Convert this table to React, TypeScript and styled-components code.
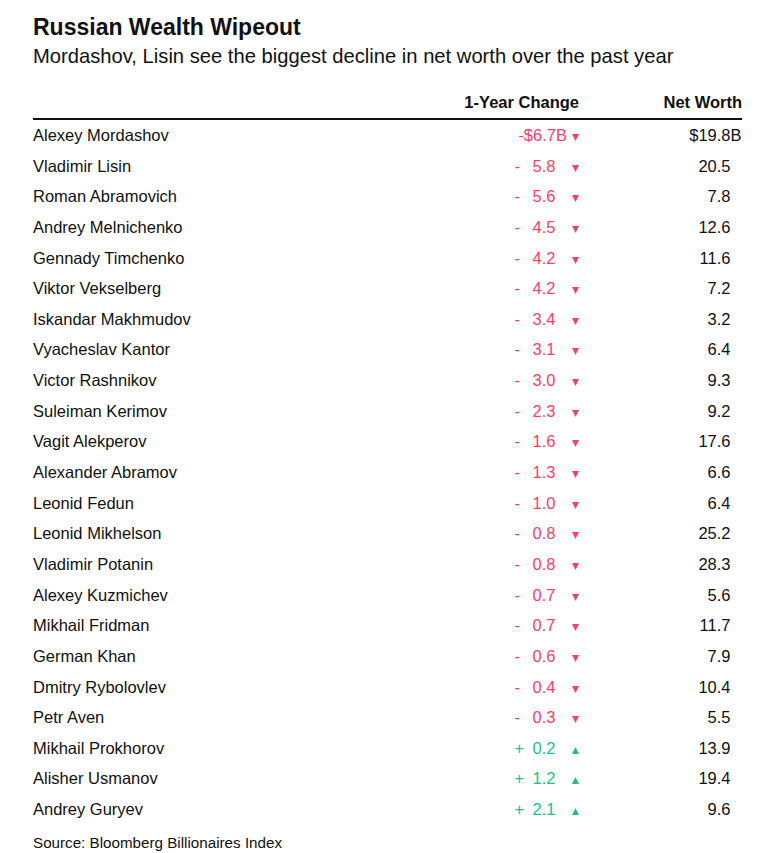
import React from "react";
import styled, { createGlobalStyle } from "styled-components";

const Global = createGlobalStyle`
  html, body { margin: 0; padding: 0; background: #ffffff; }
  body { font-family: "Liberation Sans", Arial, Helvetica, sans-serif; color: #111111; }
`;

const Page = styled.div`
  width: 709px;
  padding: 14px 0 0 33px;
`;

const Title = styled.h1`
  margin: 0;
  font-size: 23px;
  line-height: 27px;
  font-weight: 700;
  color: #111111;
`;

const Subtitle = styled.p`
  margin: 3px 0 0 0;
  font-size: 20.2px;
  line-height: 24px;
  color: #111111;
`;

const Table = styled.div`
  margin-top: 24px;
  display: grid;
  grid-template-columns: 1fr 140px 163px;
`;

const HeadCell = styled.div<{ $right?: boolean }>`
  font-size: 16.5px;
  font-weight: 700;
  line-height: 20px;
  padding-bottom: 6px;
  border-bottom: 2px solid #111111;
  text-align: ${(p) => (p.$right ? "right" : "left")};
`;

const NameCell = styled.div`
  font-size: 16.5px;
  height: 30.65px;
  line-height: 30.65px;
  white-space: nowrap;
`;

const ChangeCell = styled.div<{ $up: boolean }>`
  font-size: 16.5px;
  height: 30.65px;
  line-height: 30.65px;
  display: flex;
  justify-content: flex-end;
  align-items: baseline;
  white-space: nowrap;
  color: ${(p) => (p.$up ? "#1ec184" : "#ff3f64")};
`;

const Sign = styled.span`
  width: 6px;
`;

const Value = styled.span`
  width: 35px;
  text-align: right;
`;

const Unit = styled.span`
  width: 11.5px;
`;

const Arrow = styled.svg`
  width: 7px;
  height: 7px;
  margin-left: 5px;
`;

const WorthCell = styled.div`
  font-size: 16.5px;
  height: 30.65px;
  line-height: 30.65px;
  display: flex;
  justify-content: flex-end;
  white-space: nowrap;
`;

const WorthUnit = styled.span`
  width: 11.5px;
`;

const Source = styled.div`
  margin-top: 8px;
  font-size: 15.2px;
  line-height: 20px;
  color: #111111;
`;

type Row = { name: string; change: number; worth: string };

const rows: Row[] = [
  { name: "Alexey Mordashov", change: -6.7, worth: "19.8" },
  { name: "Vladimir Lisin", change: -5.8, worth: "20.5" },
  { name: "Roman Abramovich", change: -5.6, worth: "7.8" },
  { name: "Andrey Melnichenko", change: -4.5, worth: "12.6" },
  { name: "Gennady Timchenko", change: -4.2, worth: "11.6" },
  { name: "Viktor Vekselberg", change: -4.2, worth: "7.2" },
  { name: "Iskandar Makhmudov", change: -3.4, worth: "3.2" },
  { name: "Vyacheslav Kantor", change: -3.1, worth: "6.4" },
  { name: "Victor Rashnikov", change: -3.0, worth: "9.3" },
  { name: "Suleiman Kerimov", change: -2.3, worth: "9.2" },
  { name: "Vagit Alekperov", change: -1.6, worth: "17.6" },
  { name: "Alexander Abramov", change: -1.3, worth: "6.6" },
  { name: "Leonid Fedun", change: -1.0, worth: "6.4" },
  { name: "Leonid Mikhelson", change: -0.8, worth: "25.2" },
  { name: "Vladimir Potanin", change: -0.8, worth: "28.3" },
  { name: "Alexey Kuzmichev", change: -0.7, worth: "5.6" },
  { name: "Mikhail Fridman", change: -0.7, worth: "11.7" },
  { name: "German Khan", change: -0.6, worth: "7.9" },
  { name: "Dmitry Rybolovlev", change: -0.4, worth: "10.4" },
  { name: "Petr Aven", change: -0.3, worth: "5.5" },
  { name: "Mikhail Prokhorov", change: 0.2, worth: "13.9" },
  { name: "Alisher Usmanov", change: 1.2, worth: "19.4" },
  { name: "Andrey Guryev", change: 2.1, worth: "9.6" },
];

function Triangle({ up }: { up: boolean }) {
  return (
    <Arrow viewBox="0 0 7 7">
      {up ? (
        <polygon points="3.5,0 7,7 0,7" fill="currentColor" />
      ) : (
        <polygon points="0,0 7,0 3.5,7" fill="currentColor" />
      )}
    </Arrow>
  );
}

export default function App() {
  return (
    <>
      <Global />
      <Page>
        <Title>Russian Wealth Wipeout</Title>
        <Subtitle>Mordashov, Lisin see the biggest decline in net worth over the past year</Subtitle>
        <Table>
          <HeadCell />
          <HeadCell $right>1-Year Change</HeadCell>
          <HeadCell $right>Net Worth</HeadCell>
          {rows.map((r, i) => {
            const up = r.change > 0;
            const first = i === 0;
            const abs = Math.abs(r.change).toFixed(1);
            return (
              <React.Fragment key={r.name}>
                <NameCell>{r.name}</NameCell>
                <ChangeCell $up={up}>
                  {first ? (
                    <span>{`-$${abs}B`}</span>
                  ) : (
                    <>
                      <Sign>{up ? "+" : "-"}</Sign>
                      <Value>{abs}</Value>
                      <Unit />
                    </>
                  )}
                  <Triangle up={up} />
                </ChangeCell>
                <WorthCell>
                  <span>{first ? `$${r.worth}` : r.worth}</span>
                  <WorthUnit>{first ? "B" : ""}</WorthUnit>
                </WorthCell>
              </React.Fragment>
            );
          })}
        </Table>
        <Source>Source: Bloomberg Billionaires Index</Source>
      </Page>
    </>
  );
}
